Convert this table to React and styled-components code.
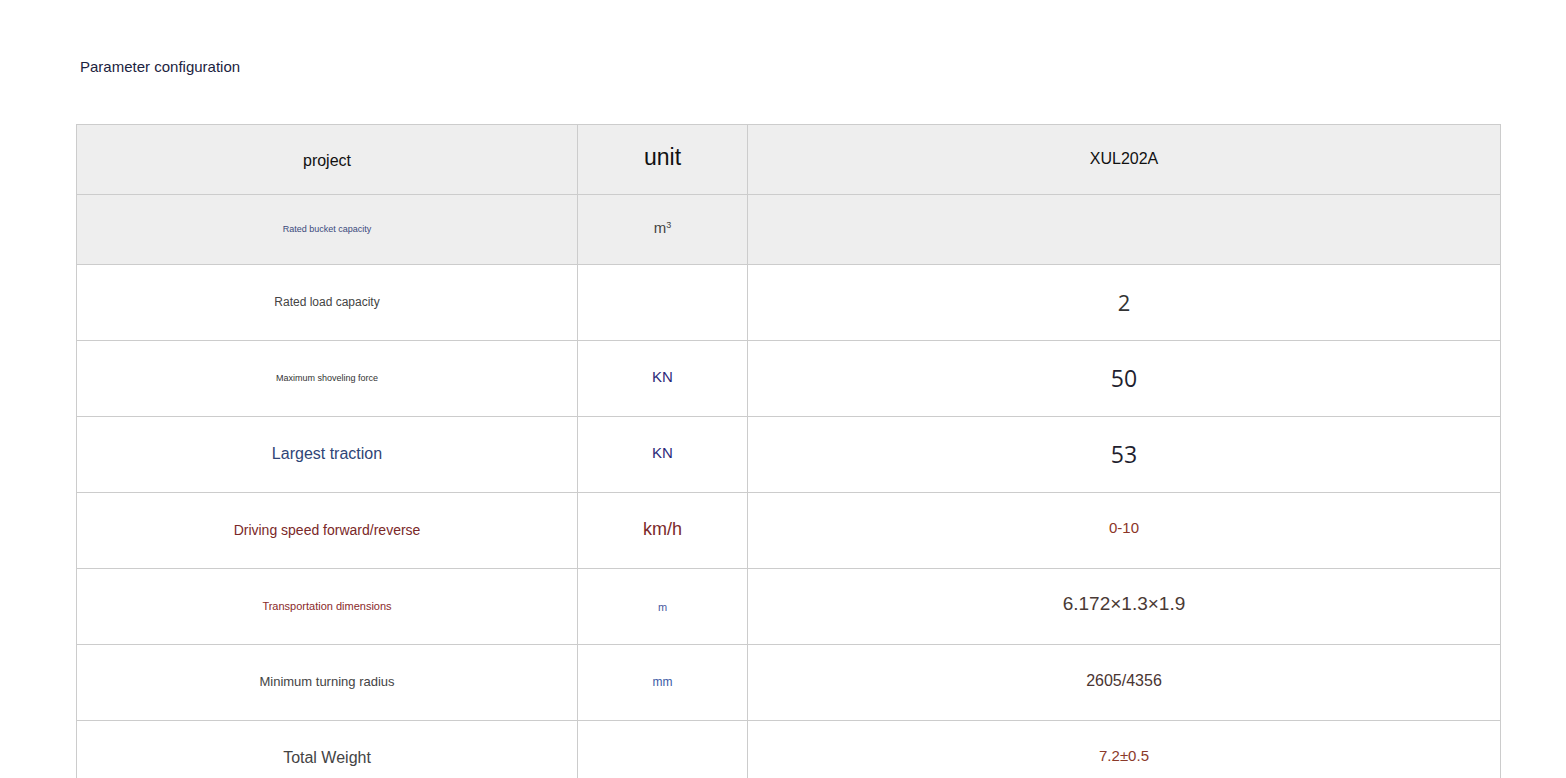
import styled, { createGlobalStyle } from 'styled-components';

const GlobalStyle = createGlobalStyle`
  html, body {
    margin: 0;
    padding: 0;
    background: #ffffff;
  }

  body {
    font-family: 'Liberation Sans', Arial, sans-serif;
  }
`;

const Page = styled.div`
  padding: 58px 0 0 76px;
`;

const Title = styled.div`
  font-size: 15px;
  line-height: 17px;
  color: #1c2340;
  padding-left: 4px;
  margin-bottom: 49px;
`;

const SpecTable = styled.table`
  width: 1425px;
  border-collapse: collapse;
  table-layout: fixed;
`;

const Row = styled.tr`
  height: ${({ $height }) => $height}px;
  background: ${({ $shaded }) => ($shaded ? '#eeeeee' : '#ffffff')};
`;

const Cell = styled.td`
  border: 1px solid #cccccc;
  padding: ${({ $lift = 0 }) => ($lift > 0 ? `0 0 ${$lift}px` : `${-$lift}px 0 0`)};
  text-align: center;
  vertical-align: middle;
  font-family: ${({ $font }) =>
    $font === 'open' ? "'Open Sans', 'Liberation Sans', sans-serif" : "'Liberation Sans', Arial, sans-serif"};
  font-size: ${({ $size }) => $size}px;
  color: ${({ $color }) => $color};
  line-height: 1.15;
`;

const Sup = styled.sup`
  font-size: 0.6em;
  vertical-align: 0.6em;
  line-height: 0;
`;

// each row keeps the odd mixed formatting of the original spec sheet
const rows = [
  {
    label: 'Rated bucket capacity', labelSize: 9, labelColor: '#3b4a7c',
    unit: <>m<Sup>3</Sup></>, unitSize: 15, unitColor: '#444444', unitLift: 3,
    value: '', valueSize: 16, valueColor: '#333333',
    shaded: true, height: 70
  },
  {
    label: 'Rated load capacity', labelSize: 12, labelColor: '#444444',
    unit: '', unitSize: 15, unitColor: '#444444',
    value: '2', valueSize: 22, valueColor: '#333333', valueFont: 'open'
  },
  {
    label: 'Maximum shoveling force', labelSize: 9, labelColor: '#333333',
    unit: 'KN', unitSize: 15, unitColor: '#2b2a7a', unitLift: 3,
    value: '50', valueSize: 23, valueColor: '#1f1f2f', valueFont: 'open'
  },
  {
    label: 'Largest traction', labelSize: 16, labelColor: '#2f4577',
    unit: 'KN', unitSize: 15, unitColor: '#2b2a7a', unitLift: 3,
    value: '53', valueSize: 23, valueColor: '#1f1f2f', valueFont: 'open'
  },
  {
    label: 'Driving speed forward/reverse', labelSize: 14, labelColor: '#7a2828',
    unit: 'km/h', unitSize: 18, unitColor: '#7a2a2a', unitLift: 3,
    value: '0-10', valueSize: 15, valueColor: '#8b3527', valueLift: 5
  },
  {
    label: 'Transportation dimensions', labelSize: 11, labelColor: '#8a2a2a',
    unit: 'm', unitSize: 11, unitColor: '#4a5aa0', unitLift: -2,
    value: '6.172×1.3×1.9', valueSize: 19, valueColor: '#4a3a35', valueLift: 5
  },
  {
    label: 'Minimum turning radius', labelSize: 13, labelColor: '#444444',
    unit: 'mm', unitSize: 12, unitColor: '#3a5aa5',
    value: '2605/4356', valueSize: 16, valueColor: '#4a3532', valueLift: 2
  },
  {
    label: 'Total Weight', labelSize: 16, labelColor: '#444444',
    unit: '', unitSize: 15, unitColor: '#444444',
    value: '7.2±0.5', valueSize: 15, valueColor: '#8b3a2a', valueLift: 5
  }
];

export default function App() {
  return (
    <>
      <GlobalStyle />
      <Page>
        <Title>Parameter configuration</Title>
        <SpecTable>
          <colgroup>
            <col style={{ width: 501 }} />
            <col style={{ width: 170 }} />
            <col />
          </colgroup>
          <tbody>
            <Row $height={70} $shaded>
              <Cell $size={16} $color="#111111" $lift={-4}>project</Cell>
              <Cell $size={23} $color="#111111" $lift={4}>unit</Cell>
              <Cell $size={16} $color="#111111">XUL202A</Cell>
            </Row>
            {rows.map((row) => (
              <Row key={row.label} $height={row.height || 76} $shaded={row.shaded}>
                <Cell $size={row.labelSize} $color={row.labelColor}>{row.label}</Cell>
                <Cell $size={row.unitSize} $color={row.unitColor} $lift={row.unitLift}>{row.unit}</Cell>
                <Cell $size={row.valueSize} $color={row.valueColor} $font={row.valueFont} $lift={row.valueLift}>
                  {row.value}
                </Cell>
              </Row>
            ))}
          </tbody>
        </SpecTable>
      </Page>
    </>
  );
}
